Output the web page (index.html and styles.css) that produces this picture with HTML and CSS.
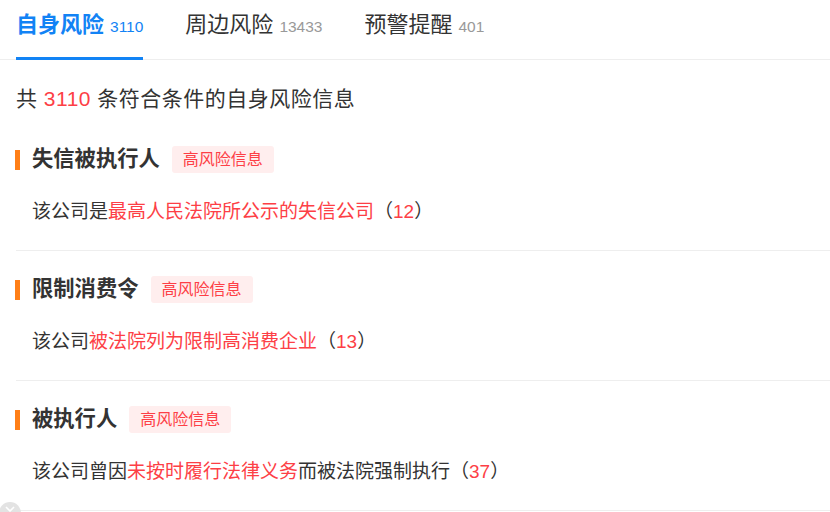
FILE: index.html
```html
<!DOCTYPE html>
<html lang="zh-CN">
<head>
<meta charset="utf-8">
<title>风险信息</title>
<link rel="stylesheet" href="styles.css">
</head>
<body>
<div class="page">
  <nav class="tabs">
    <div class="tab active"><span class="tab-name">自身风险</span><span class="tab-count">3110</span></div>
    <div class="tab"><span class="tab-name">周边风险</span><span class="tab-count">13433</span></div>
    <div class="tab"><span class="tab-name">预警提醒</span><span class="tab-count">401</span></div>
  </nav>

  <p class="summary">共 <span class="red">3110</span> 条符合条件的自身风险信息</p>

  <section class="risk">
    <div class="risk-head">
      <h3 class="risk-title">失信被执行人</h3>
      <span class="badge">高风险信息</span>
    </div>
    <p class="risk-desc">该公司是<span class="red">最高人民法院所公示的失信公司</span>（<span class="red">12</span>）</p>
  </section>

  <section class="risk">
    <div class="risk-head">
      <h3 class="risk-title">限制消费令</h3>
      <span class="badge">高风险信息</span>
    </div>
    <p class="risk-desc">该公司<span class="red">被法院列为限制高消费企业</span>（<span class="red">13</span>）</p>
  </section>

  <section class="risk">
    <div class="risk-head">
      <h3 class="risk-title">被执行人</h3>
      <span class="badge">高风险信息</span>
    </div>
    <p class="risk-desc">该公司曾因<span class="red">未按时履行法律义务</span>而被法院强制执行（<span class="red">37</span>）</p>
  </section>

  <div class="float-btn">
    <svg class="float-x" width="10" height="10" viewBox="0 0 10 10"><path d="M1 1 L9 9 M9 1 L1 9" stroke="#fff" stroke-width="1.6" fill="none"/></svg>
  </div>
</div>
</body>
</html>
```

FILE: styles.css
```css
html, body {
  margin: 0;
  padding: 0;
  background: #fff;
}

body {
  font-family: "Liberation Sans", "Noto Sans CJK SC", sans-serif;
  color: #333;
  width: 830px;
  height: 512px;
  overflow: hidden;
}

.page {
  position: relative;
  height: 512px;
}

.tabs {
  display: flex;
  gap: 42px;
  height: 60px;
  box-sizing: border-box;
  border-bottom: 1px solid #eeeeee;
  padding-left: 16px;
}

.tab {
  height: 60px;
  box-sizing: border-box;
  margin-bottom: -1px;
  padding-top: 12px;
  border-bottom: 3px solid transparent;
  display: flex;
  align-items: baseline;
  white-space: nowrap;
}

.tab-name {
  font-size: 22px;
  line-height: 26px;
  color: #333;
}

.tab-count {
  font-size: 15.5px;
  color: #999;
  margin-left: 6px;
}

.tab.active {
  border-bottom-color: #1283f5;
}

.tab.active .tab-name {
  color: #1283f5;
  font-weight: bold;
}

.tab.active .tab-count {
  color: #1283f5;
}

.summary {
  margin: 24px 0 0 16px;
  font-size: 21px;
  letter-spacing: 0.5px;
  line-height: 30px;
  color: #333;
}

.red {
  color: #fd3f46;
}

.risk {
  margin-left: 16px;
  padding: 25px 0 26px;
  border-bottom: 1px solid #eeeeee;
}

.risk:first-of-type {
  margin-top: 7px;
}

.risk-head {
  display: flex;
  align-items: center;
  height: 27px;
}

.risk-title {
  margin: 0 0 0 -1px;
  font-size: 21.3px;
  font-weight: bold;
  color: #333;
  line-height: 27px;
  padding-left: 12px;
  border-left: 5px solid #ff7f17;
  height: 20px;
  display: flex;
  align-items: center;
}

.badge {
  margin-left: 12px;
  height: 27px;
  line-height: 27px;
  padding: 0 11px;
  font-size: 16px;
  color: #fd3f46;
  background: #ffeeee;
  border-radius: 3px;
}

.risk-desc {
  margin: 27px 0 0 16px;
  font-size: 19px;
  line-height: 24px;
  color: #333;
}

.float-btn {
  position: absolute;
  left: -1px;
  top: 502px;
  width: 22px;
  height: 22px;
  border-radius: 50%;
  background: #e3e3e3;
  display: flex;
  justify-content: center;
  padding-top: 4px;
  box-sizing: border-box;
}
```
